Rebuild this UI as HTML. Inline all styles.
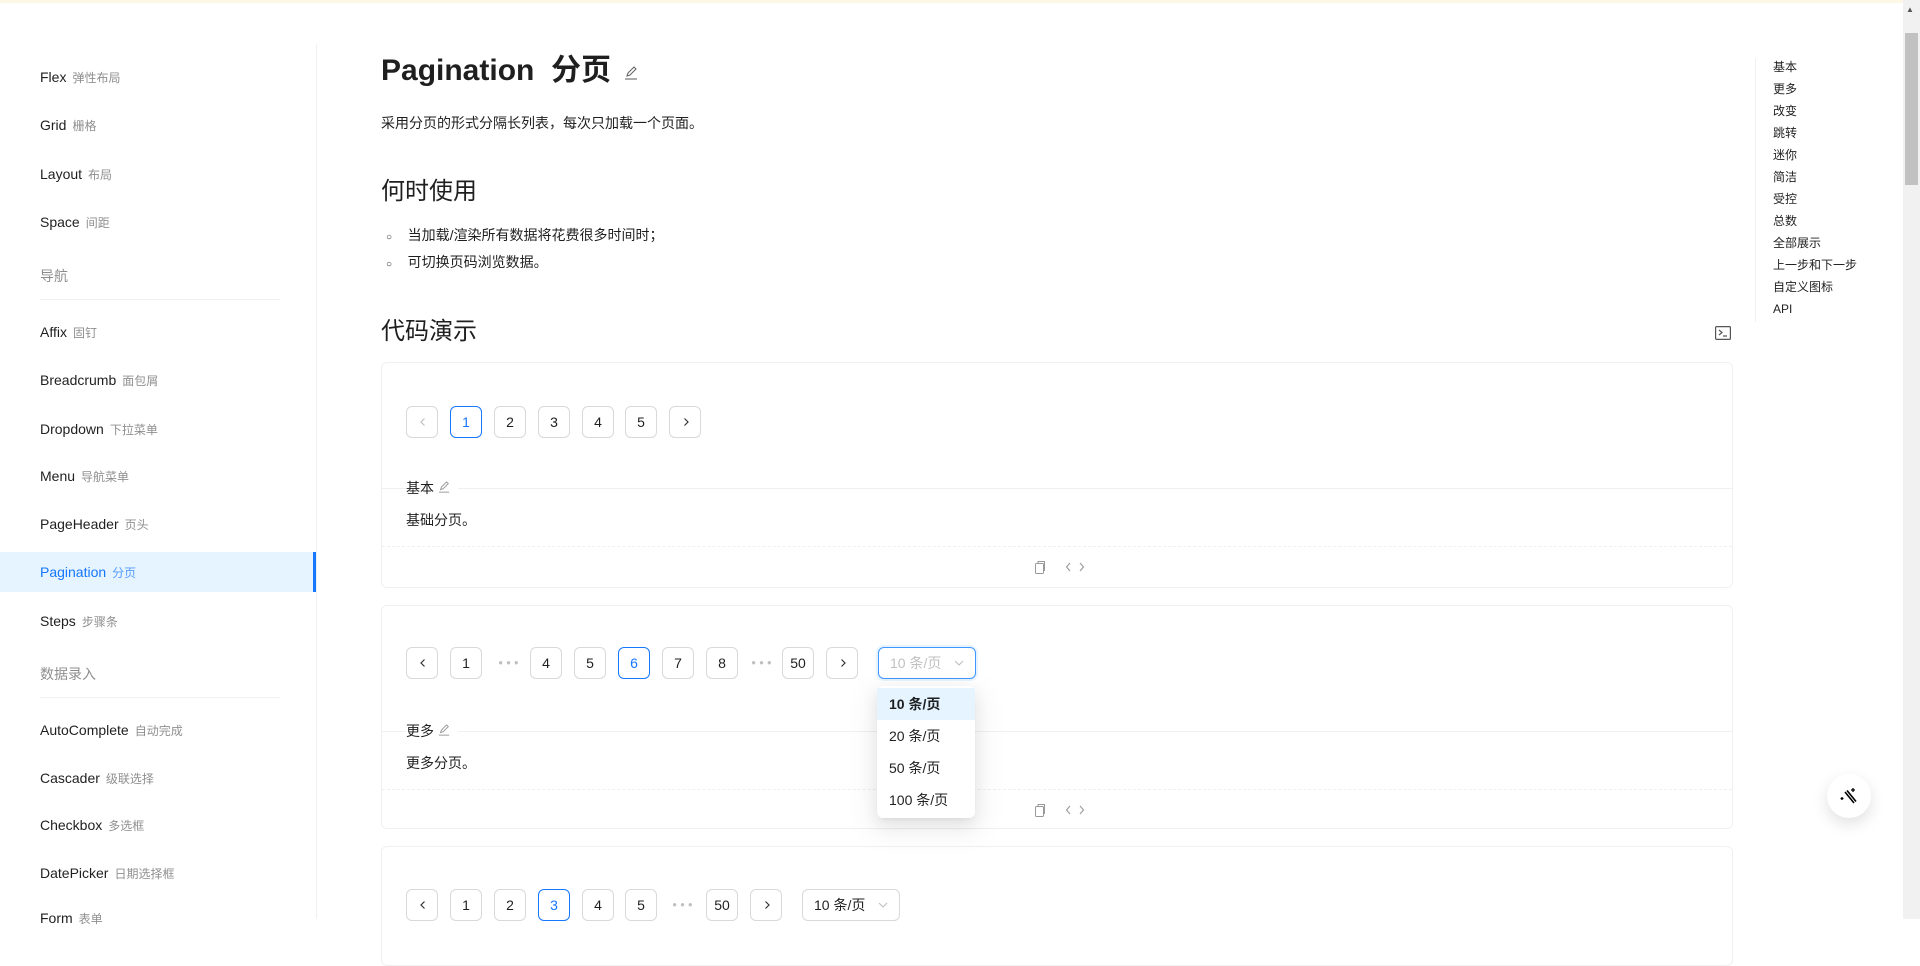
<!DOCTYPE html>
<html><head><meta charset="utf-8"><style>
*{box-sizing:border-box;margin:0;padding:0}
body{width:1920px;height:919px;overflow:hidden;background:#fff;font-family:"Liberation Sans","Noto Sans CJK SC",sans-serif;color:rgba(0,0,0,.88);position:relative}
.a{position:absolute}
.top{left:0;top:0;width:1920px;height:3px;background:#fdf8e6}
.side{left:0;top:44px;width:317px;height:875px;border-right:1px solid #f0f0f0}
.it{position:absolute;left:0;width:316px;height:40px;line-height:40px;padding-left:40px;font-size:14px}
.it small{font-size:12px;color:rgba(0,0,0,.45);margin-left:6px}
.grp{position:absolute;left:40px;font-size:14px;color:rgba(0,0,0,.45)}
.ln{position:absolute;left:40px;width:240px;height:1px;background:#f0f0f0}
.act{background:#e6f4ff;color:#1677ff;border-right:3px solid #1677ff}
.act small{color:#1677ff;opacity:.7}
.box{left:381px;width:1352px;border:1px solid #f0f0f0;border-radius:6px}
.pg{position:absolute;width:32px;height:32px;border:1px solid #d9d9d9;border-radius:6px;text-align:center;line-height:30px;font-size:14px;background:#fff}
.pg svg{position:absolute;left:11px;top:10px}
.pg.on{border-color:#1677ff;color:#1677ff}
.el{position:absolute;width:32px;height:32px;text-align:center;line-height:32px;color:rgba(0,0,0,.25);font-size:8px;letter-spacing:3px}
.sel{position:absolute;width:98px;height:32px;border:1px solid #d9d9d9;border-radius:6px;font-size:14px;line-height:30px;padding-left:11px}
.sel svg{position:absolute;right:11px;top:10px}
.mt{position:absolute;left:0;right:0;height:1px;background:#f0f0f0}
.mtt{position:absolute;left:24px;background:#fff;padding:0 8px 0 0;font-size:14px;line-height:22px}
.ds{position:absolute;left:0;right:0;border-top:1px dashed #f0f0f0}
.ic{position:absolute}
.toc{position:absolute;left:1773px;font-size:12px;line-height:22px}
</style></head><body>
<div class="a top"></div>
<div class="a side"></div>
<div class="it" style="top:57px">Flex<small>弹性布局</small></div>
<div class="it" style="top:105px">Grid<small>栅格</small></div>
<div class="it" style="top:154px">Layout<small>布局</small></div>
<div class="it" style="top:202px">Space<small>间距</small></div>
<div class="grp" style="top:266px">导航</div>
<div class="ln" style="top:299px"></div>
<div class="it" style="top:312px">Affix<small>固钉</small></div>
<div class="it" style="top:360px">Breadcrumb<small>面包屑</small></div>
<div class="it" style="top:409px">Dropdown<small>下拉菜单</small></div>
<div class="it" style="top:456px">Menu<small>导航菜单</small></div>
<div class="it" style="top:504px">PageHeader<small>页头</small></div>
<div class="it act" style="top:552px">Pagination<small>分页</small></div>
<div class="it" style="top:601px">Steps<small>步骤条</small></div>
<div class="grp" style="top:664px">数据录入</div>
<div class="ln" style="top:697px"></div>
<div class="it" style="top:710px">AutoComplete<small>自动完成</small></div>
<div class="it" style="top:758px">Cascader<small>级联选择</small></div>
<div class="it" style="top:805px">Checkbox<small>多选框</small></div>
<div class="it" style="top:853px">DatePicker<small>日期选择框</small></div>
<div class="it" style="top:898px">Form<small>表单</small></div>

<div class="a" style="left:381px;top:51px;font-size:30px;font-weight:600;line-height:40px">Pagination&nbsp;&nbsp;分页</div>
<svg class="a" style="left:624px;top:66px" width="14" height="14" viewBox="0 0 14 14" fill="none" stroke="#666" stroke-width="1.1"><path d="M3 10l1-3 6-6 2 2-6 6-3 1z"/><path d="M1 13h12"/></svg>
<div class="a" style="left:381px;top:112px;font-size:14px;line-height:22px">采用分页的形式分隔长列表，每次只加载一个页面。</div>
<div class="a" style="left:381px;top:176px;font-size:24px;line-height:32px">何时使用</div>
<div class="a" style="left:386px;top:224px;font-size:14px;line-height:22px"><span style="font-size:10px">○</span>&nbsp;&nbsp;&nbsp;&nbsp;当加载/渲染所有数据将花费很多时间时；</div>
<div class="a" style="left:386px;top:251px;font-size:14px;line-height:22px"><span style="font-size:10px">○</span>&nbsp;&nbsp;&nbsp;&nbsp;可切换页码浏览数据。</div>
<div class="a" style="left:381px;top:316px;font-size:24px;line-height:32px">代码演示</div>
<svg class="a" style="left:1715px;top:326px" width="16" height="14" viewBox="0 0 16 14" fill="none" stroke="#555" stroke-width="1.2"><rect x="0.6" y="0.6" width="14.8" height="12.8" rx="1"/><path d="M4 4l3 2.5L4 9M8 10h4"/></svg>

<div class="a box" style="top:362px;height:226px">
<div class="pg" style="left:24px;top:43px"><svg width="10" height="10" viewBox="0 0 10 10" fill="none" stroke="rgba(0,0,0,.25)" stroke-width="1.2"><path d="M6.5 1.5L3 5l3.5 3.5"/></svg></div>
<div class="pg on" style="left:68px;top:43px">1</div>
<div class="pg" style="left:112px;top:43px">2</div>
<div class="pg" style="left:156px;top:43px">3</div>
<div class="pg" style="left:200px;top:43px">4</div>
<div class="pg" style="left:243px;top:43px">5</div>
<div class="pg" style="left:287px;top:43px"><svg width="10" height="10" viewBox="0 0 10 10" fill="none" stroke="#333" stroke-width="1.2"><path d="M3.5 1.5L7 5 3.5 8.5"/></svg></div>
<div class="mt" style="top:125px"></div>
<div class="mtt" style="top:114px">基本 <svg width="12" height="12" viewBox="0 0 14 14" fill="none" stroke="#999" stroke-width="1.1"><path d="M3 10l1-3 6-6 2 2-6 6-3 1z"/><path d="M1 13h12"/></svg></div>
<div class="a" style="left:24px;top:147px;font-size:14px">基础分页。</div>
<div class="ds" style="top:183px"></div>
<svg class="ic" style="left:652px;top:197px" width="12" height="14" viewBox="0 0 12 14" fill="none" stroke="#999"><rect x="1.5" y="3.5" width="8" height="10" rx="1"/><path d="M4 3.5V1.5h6.5v9h-1"/></svg>
<svg class="ic" style="left:683px;top:199px" width="20" height="10" viewBox="0 0 20 10" fill="none" stroke="#999" stroke-width="1.1"><path d="M5 1L1.5 5 5 9M15 1l3.5 4L15 9"/></svg>
</div>

<div class="a box" style="top:605px;height:224px">
<div class="pg" style="left:24px;top:41px"><svg width="10" height="10" viewBox="0 0 10 10" fill="none" stroke="#333" stroke-width="1.2"><path d="M6.5 1.5L3 5l3.5 3.5"/></svg></div>
<div class="pg" style="left:68px;top:41px">1</div>
<div class="el" style="left:112px;top:41px">●●●</div>
<div class="pg" style="left:148px;top:41px">4</div>
<div class="pg" style="left:192px;top:41px">5</div>
<div class="pg on" style="left:236px;top:41px">6</div>
<div class="pg" style="left:280px;top:41px">7</div>
<div class="pg" style="left:324px;top:41px">8</div>
<div class="el" style="left:365px;top:41px">●●●</div>
<div class="pg" style="left:400px;top:41px">50</div>
<div class="pg" style="left:444px;top:41px"><svg width="10" height="10" viewBox="0 0 10 10" fill="none" stroke="#333" stroke-width="1.2"><path d="M3.5 1.5L7 5 3.5 8.5"/></svg></div>
<div class="sel" style="left:496px;top:41px;border-color:#4096ff;box-shadow:0 0 0 2px rgba(5,145,255,.1);color:rgba(0,0,0,.25)">10 条/页<svg width="10" height="10" viewBox="0 0 10 10" fill="none" stroke="rgba(0,0,0,.25)" stroke-width="1.1"><path d="M1 3l4 4 4-4"/></svg></div>
<div class="mt" style="top:125px"></div>
<div class="mtt" style="top:114px">更多 <svg width="12" height="12" viewBox="0 0 14 14" fill="none" stroke="#999" stroke-width="1.1"><path d="M3 10l1-3 6-6 2 2-6 6-3 1z"/><path d="M1 13h12"/></svg></div>
<div class="a" style="left:24px;top:147px;font-size:14px">更多分页。</div>
<div class="ds" style="top:183px"></div>
<svg class="ic" style="left:652px;top:197px" width="12" height="14" viewBox="0 0 12 14" fill="none" stroke="#999"><rect x="1.5" y="3.5" width="8" height="10" rx="1"/><path d="M4 3.5V1.5h6.5v9h-1"/></svg>
<svg class="ic" style="left:683px;top:199px" width="20" height="10" viewBox="0 0 20 10" fill="none" stroke="#999" stroke-width="1.1"><path d="M5 1L1.5 5 5 9M15 1l3.5 4L15 9"/></svg>
</div>

<div class="a box" style="top:846px;height:120px">
<div class="pg" style="left:24px;top:42px"><svg width="10" height="10" viewBox="0 0 10 10" fill="none" stroke="#333" stroke-width="1.2"><path d="M6.5 1.5L3 5l3.5 3.5"/></svg></div>
<div class="pg" style="left:68px;top:42px">1</div>
<div class="pg" style="left:112px;top:42px">2</div>
<div class="pg on" style="left:156px;top:42px">3</div>
<div class="pg" style="left:200px;top:42px">4</div>
<div class="pg" style="left:243px;top:42px">5</div>
<div class="el" style="left:286px;top:42px">●●●</div>
<div class="pg" style="left:324px;top:42px">50</div>
<div class="pg" style="left:368px;top:42px"><svg width="10" height="10" viewBox="0 0 10 10" fill="none" stroke="#333" stroke-width="1.2"><path d="M3.5 1.5L7 5 3.5 8.5"/></svg></div>
<div class="sel" style="left:420px;top:42px">10 条/页<svg width="10" height="10" viewBox="0 0 10 10" fill="none" stroke="rgba(0,0,0,.25)" stroke-width="1.1"><path d="M1 3l4 4 4-4"/></svg></div>
</div>

<div class="a" style="left:877px;top:686px;width:98px;height:132px;background:#fff;border-radius:6px;box-shadow:0 6px 16px rgba(0,0,0,.08),0 3px 6px -4px rgba(0,0,0,.12),0 9px 28px 8px rgba(0,0,0,.05);padding:2px 0;font-size:14px">
<div style="height:32px;line-height:32px;padding-left:12px;background:#e6f4ff;font-weight:600">10 条/页</div>
<div style="height:32px;line-height:32px;padding-left:12px">20 条/页</div>
<div style="height:32px;line-height:32px;padding-left:12px">50 条/页</div>
<div style="height:32px;line-height:32px;padding-left:12px">100 条/页</div>
</div>

<div class="a" style="left:1755px;top:58px;width:1px;height:264px;background:#f0f0f0"></div>
<div class="toc" style="top:56px">基本<br>更多<br>改变<br>跳转<br>迷你<br>简洁<br>受控<br>总数<br>全部展示<br>上一步和下一步<br>自定义图标<br>API</div>

<div class="a" style="left:1827px;top:774px;width:44px;height:44px;border-radius:50%;background:#fff;box-shadow:0 6px 16px rgba(0,0,0,.12)"></div>
<svg class="a" style="left:1839px;top:786px" width="20" height="20" viewBox="0 0 20 20" fill="none" stroke="#000" stroke-width="1.6"><path d="M6 6l9 11M8 4.5l9 11"/><path d="M14 2v4M12 4h4M3 11v3M1.5 12.5h3" stroke-width="1.3"/></svg>

<div class="a" style="left:1903px;top:0;width:17px;height:919px;background:#f1f1f1"></div>
<div class="a" style="left:1905px;top:33px;width:13px;height:152px;background:#c1c1c1"></div>
<div class="a" style="left:1906px;top:5px;font-size:8px;color:#555">▲</div>
</body></html>
